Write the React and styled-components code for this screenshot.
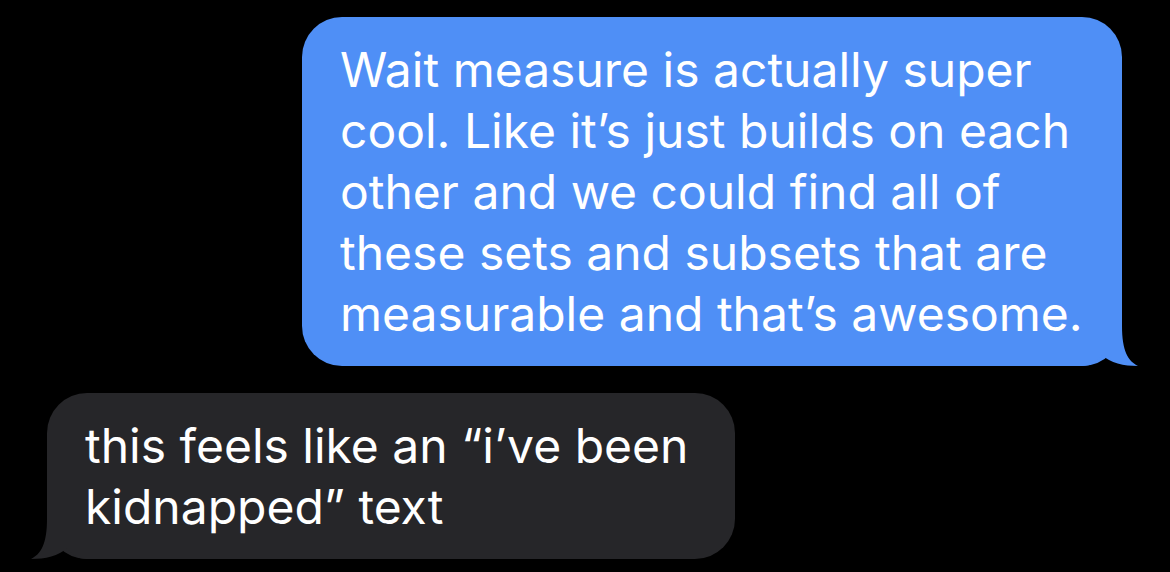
import React from 'react'
import styled, { createGlobalStyle } from 'styled-components'

const GlobalStyle = createGlobalStyle`
  html, body {
    margin: 0;
    padding: 0;
    background: #000;
  }
  #root {
    min-height: 572px;
  }
`

const colors = {
  blue: '#4f8ff6',
  gray: '#262629',
}

const Thread = styled.div`
  display: flex;
  flex-direction: column;
  gap: 27px;
  padding-top: 17px;
  width: 1170px;
  height: 572px;
  box-sizing: border-box;
  background: #000;
  overflow: hidden;
`

const Bubble = styled.div`
  position: relative;
  box-sizing: border-box;
  width: ${p => p.width}px;
  align-self: ${p => (p.sent ? 'flex-end' : 'flex-start')};
  margin: ${p => (p.sent ? '0 48px 0 0' : '0 0 0 47px')};
  padding: 22px 30px 22px 38px;
  border-radius: 40px;
  background: ${p => (p.sent ? colors.blue : colors.gray)};
  color: #fff;
  font-family: Inter, "Noto Sans", sans-serif;
  font-size: 48px;
  line-height: 61px;
`

const Line = styled.span`
  display: block;
  white-space: nowrap;
`

const TailSvg = styled.svg`
  position: absolute;
  bottom: 0;
  width: 56px;
  height: 40px;
  ${p => (p.sent ? 'right: -16px;' : 'left: -16px; transform: scaleX(-1);')}
`

function Tail({ sent, color }) {
  return (
    <TailSvg sent={sent} viewBox="0 0 56 40">
      <path
        d="M0 40 C10 40 15 35 20 29 C28 37 42 40 56 40 C46 35 40 25 40 0 L0 0 Z"
        fill={color}
      />
    </TailSvg>
  )
}

const messages = [
  {
    sent: true,
    width: 820,
    lines: [
      'Wait measure is actually super',
      'cool. Like it\u2019s just builds on each',
      'other and we could find all of',
      'these sets and subsets that are',
      'measurable and that\u2019s awesome.',
    ],
  },
  {
    sent: false,
    width: 688,
    lines: ['this feels like an \u201ci\u2019ve been', 'kidnapped\u201d text'],
  },
]

export default function App() {
  return (
    <>
      <GlobalStyle />
      <Thread>
        {messages.map((m, i) => (
          <Bubble key={i} sent={m.sent} width={m.width}>
            {m.lines.map((l, j) => (
              <Line key={j}>{l}</Line>
            ))}
            <Tail sent={m.sent} color={m.sent ? colors.blue : colors.gray} />
          </Bubble>
        ))}
      </Thread>
    </>
  )
}
